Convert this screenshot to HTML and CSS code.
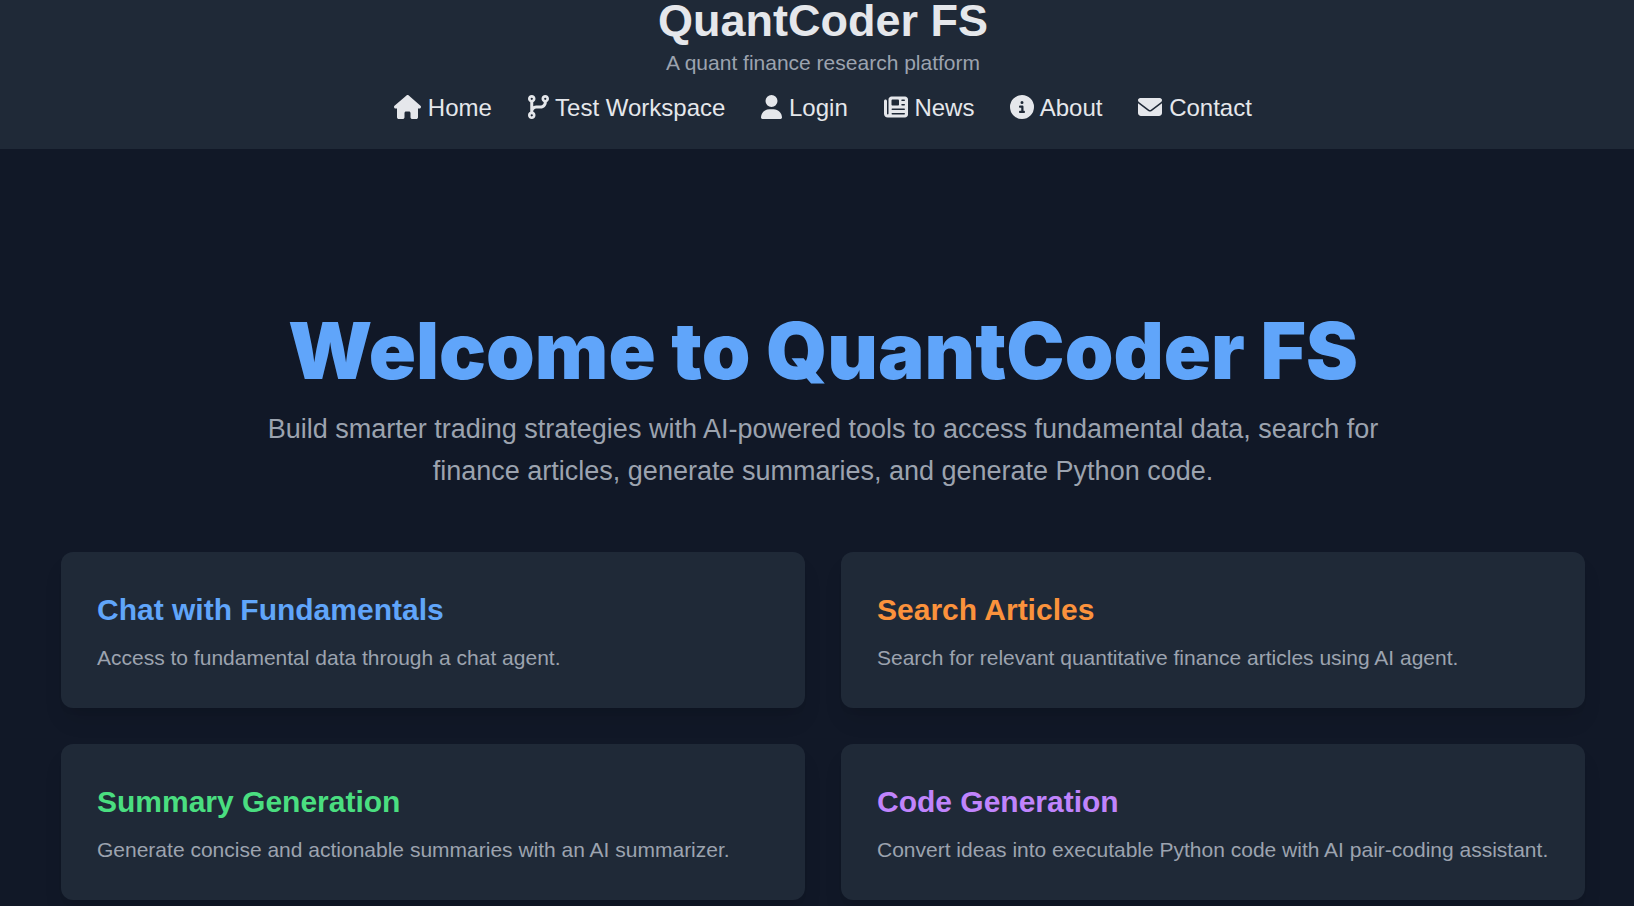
FILE: index.html
```html
<!DOCTYPE html>
<html lang="en">
<head>
<meta charset="utf-8">
<title>QuantCoder FS</title>
<link rel="stylesheet" href="styles.css">
</head>
<body>
<header class="site-header">
  <h1 class="brand">QuantCoder FS</h1>
  <p class="tagline">A quant finance research platform</p>
  <nav class="nav">
    <a class="nav-link" href="#"><svg class="icon" viewBox="0 0 576 512" aria-hidden="true"><path d="M575.8 255.5c0 18-15 32.100-32 32.100h-32l.7 160.200c0 2.700-.2 5.400-.5 8.100V472c0 22.100-17.900 40-40 40H456c-1.100 0-2.200 0-3.300-.1c-1.400.1-2.800.1-4.200.1H416 392c-22.100 0-40-17.900-40-40V448 384c0-17.700-14.300-32-32-32H256c-17.700 0-32 14.300-32 32v64 24c0 22.100-17.900 40-40 40H160 128.100c-1.500 0-3-.1-4.500-.2c-1.200.1-2.400.2-3.600.2H104c-22.100 0-40-17.900-40-40V360c0-.9 0-1.900.1-2.800V287.600H32c-18 0-32-14-32-32.100c0-9 3-17 10-24L266.400 8c7-7 15-8 22-8s15 2 21 7L564.800 231.500c8 7 12 15 11 24z"/></svg> Home</a>
    <a class="nav-link" href="#"><svg class="icon" viewBox="0 0 448 512" aria-hidden="true"><path d="M80 104a24 24 0 1 0 0-48 24 24 0 1 0 0 48zm80-24c0 32.800-19.700 61-48 73.300v87.800c18.800-10.900 40.700-17.100 64-17.100h96c35.300 0 64-28.700 64-64v-6.700C307.700 141 288 112.800 288 80c0-44.200 35.800-80 80-80s80 35.800 80 80c0 32.800-19.700 61-48 73.300V160c0 70.700-57.300 128-128 128H176c-35.300 0-64 28.700-64 64v6.700c28.300 12.300 48 40.500 48 73.300c0 44.200-35.800 80-80 80s-80-35.800-80-80c0-32.800 19.700-61 48-73.300V352 153.300C19.700 141 0 112.800 0 80C0 35.800 35.800 0 80 0s80 35.800 80 80zm232 0a24 24 0 1 0-48 0 24 24 0 1 0 48 0zM80 456a24 24 0 1 0 0-48 24 24 0 1 0 0 48z"/></svg> Test Workspace</a>
    <a class="nav-link" href="#"><svg class="icon" viewBox="0 0 448 512" aria-hidden="true"><path d="M224 256A128 128 0 1 0 224 0a128 128 0 1 0 0 256zm-45.700 48C79.800 304 0 383.800 0 482.300C0 498.700 13.300 512 29.700 512H418.300c16.400 0 29.700-13.300 29.700-29.700C448 383.800 368.200 304 269.700 304H178.300z"/></svg> Login</a>
    <a class="nav-link" href="#"><svg class="icon" viewBox="0 0 512 512" aria-hidden="true"><path d="M96 96c0-35.300 28.700-64 64-64H448c35.300 0 64 28.700 64 64V416c0 35.300-28.700 64-64 64H80c-44.200 0-80-35.800-80-80V128c0-17.700 14.300-32 32-32s32 14.300 32 32V400c0 8.800 7.200 16 16 16s16-7.200 16-16V96zm64 24v80c0 13.300 10.700 24 24 24H296c13.300 0 24-10.700 24-24V120c0-13.300-10.700-24-24-24H184c-13.300 0-24 10.700-24 24zm208-8c0 8.800 7.200 16 16 16h48c8.800 0 16-7.200 16-16s-7.200-16-16-16H384c-8.800 0-16 7.200-16 16zm0 96c0 8.800 7.200 16 16 16h48c8.800 0 16-7.200 16-16s-7.200-16-16-16H384c-8.800 0-16 7.200-16 16zM160 304c0 8.800 7.200 16 16 16H432c8.800 0 16-7.200 16-16s-7.200-16-16-16H176c-8.800 0-16 7.200-16 16zm0 96c0 8.800 7.200 16 16 16H432c8.800 0 16-7.200 16-16s-7.200-16-16-16H176c-8.800 0-16 7.200-16 16z"/></svg> News</a>
    <a class="nav-link" href="#"><svg class="icon" viewBox="0 0 512 512" aria-hidden="true"><path d="M256 512A256 256 0 1 0 256 0a256 256 0 1 0 0 512zM216 336h24V272H216c-13.300 0-24-10.700-24-24s10.700-24 24-24h48c13.300 0 24 10.700 24 24v88h8c13.300 0 24 10.700 24 24s-10.700 24-24 24H216c-13.300 0-24-10.700-24-24s10.700-24 24-24zm40-208a32 32 0 1 1 0 64 32 32 0 1 1 0-64z"/></svg> About</a>
    <a class="nav-link" href="#"><svg class="icon" viewBox="0 0 512 512" aria-hidden="true"><path d="M48 64C21.500 64 0 85.500 0 112c0 15.100 7.100 29.300 19.200 38.400L236.800 313.600c11.400 8.500 27 8.500 38.400 0L492.800 150.400c12.100-9.100 19.200-23.300 19.200-38.400c0-26.500-21.500-48-48-48H48zM0 176V384c0 35.300 28.700 64 64 64H448c35.300 0 64-28.700 64-64V176L294.400 339.200c-22.800 17.100-54 17.100-76.800 0L0 176z"/></svg> Contact</a>
  </nav>
</header>
<main class="main">
  <section class="hero">
    <h2 class="hero-title">Welcome to QuantCoder FS</h2>
    <p class="hero-text">Build smarter trading strategies with AI-powered tools to access fundamental data, search for finance articles, generate summaries, and generate Python code.</p>
  </section>
  <section class="cards">
    <article class="card">
      <h3 class="card-title blue">Chat with Fundamentals</h3>
      <p class="card-text">Access to fundamental data through a chat agent.</p>
    </article>
    <article class="card">
      <h3 class="card-title orange">Search Articles</h3>
      <p class="card-text">Search for relevant quantitative finance articles using AI agent.</p>
    </article>
    <article class="card">
      <h3 class="card-title green">Summary Generation</h3>
      <p class="card-text">Generate concise and actionable summaries with an AI summarizer.</p>
    </article>
    <article class="card">
      <h3 class="card-title purple">Code Generation</h3>
      <p class="card-text">Convert ideas into executable Python code with AI pair-coding assistant.</p>
    </article>
  </section>
</main>
</body>
</html>
```
FILE: styles.css
```css
* {
  box-sizing: border-box;
}

body,
h1,
h2,
h3,
p {
  margin: 0;
}

body {
  background: #111827;
  color: #e5e7eb;
  font-family: Arial, "Liberation Sans", sans-serif;
  font-size: 24px;
  line-height: 36px;
}

.site-header {
  padding: 0 0 23px 12px;
  background: #1f2937;
  text-align: center;
}

.brand {
  margin-bottom: 6px;
  font-size: 45px;
  line-height: 42px;
}

.tagline {
  margin-bottom: 12px;
  color: #9ca3af;
  font-size: 21px;
  line-height: 30px;
}

.nav {
  display: flex;
  flex-wrap: wrap;
  justify-content: center;
  column-gap: 36px;
}

.nav-link {
  color: inherit;
  text-decoration: none;
}

.icon {
  height: 24px;
  fill: currentColor;
  vertical-align: -3px;
}

.main {
  padding: 166px 49px 36px 61px;
}

.hero {
  display: flex;
  flex-direction: column;
  align-items: center;
  gap: 21px;
  margin-bottom: 60px;
  text-align: center;
}

.hero-title {
  color: #60a5fa;
  font-family: "Arial Black", Inter, sans-serif;
  font-size: 78px;
  font-weight: 900;
  line-height: 72px;
}

.hero-text {
  max-width: 1152px;
  color: #9ca3af;
  font-size: 27px;
  line-height: 42px;
}

.cards {
  display: grid;
  grid-template-columns: 1fr 1fr;
  gap: 36px;
}

.card {
  padding: 37px 36px 35px;
  border-radius: 12px;
  background: #1f2937;
  box-shadow: 0 15px 23px -5px rgba(0, 0, 0, 0.1), 0 6px 9px -6px rgba(0, 0, 0, 0.1);
}

.card-title {
  margin-bottom: 12px;
  font-size: 30px;
  line-height: 42px;
}

.card-text {
  color: #9ca3af;
  font-size: 21px;
  line-height: 30px;
}

.blue {
  color: #60a5fa;
}

.orange {
  color: #fb923c;
}

.green {
  color: #4ade80;
}

.purple {
  color: #c084fc;
}
```
